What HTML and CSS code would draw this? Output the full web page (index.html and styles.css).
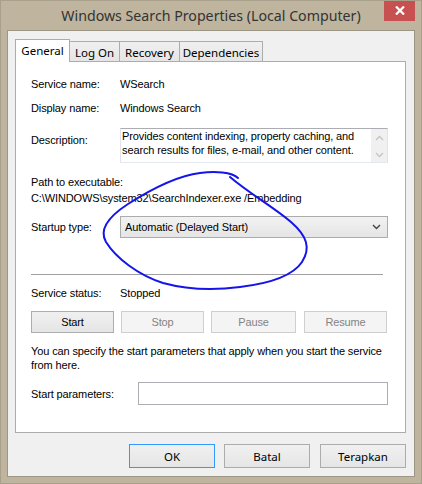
FILE: index.html
```html
<!DOCTYPE html>
<html>
<head>
<meta charset="utf-8">
<link rel="stylesheet" href="styles.css">
</head>
<body>
<div class="window">
  <div class="titlebar">
    <div class="title">Windows Search Properties (Local Computer)</div>
    <div class="close"><svg width="10" height="9" viewBox="0 0 10 9"><path d="M1 0.5 L9 8.5 M9 0.5 L1 8.5" stroke="#fff" stroke-width="2.2"/></svg></div>
  </div>
  <div class="client">
    <div class="tabs">
      <div class="tab active">General</div>
      <div class="tab t-logon">Log On</div>
      <div class="tab t-recovery">Recovery</div>
      <div class="tab t-deps">Dependencies</div>
    </div>
    <div class="panel">
      <div class="row r1"><span class="label">Service name:</span><span>WSearch</span></div>
      <div class="row r2"><span class="label">Display name:</span><span>Windows Search</span></div>
      <div class="row desc-row">
        <span class="label desc-label">Description:</span>
        <div class="desc-box">
          <div class="desc-text">Provides content indexing, property caching, and search results for files, e-mail, and other content.</div>
          <div class="scroll">
            <svg width="9" height="6" viewBox="0 0 9 6"><path d="M1 5 L4.5 1.5 L8 5" fill="none" stroke="#c4c4c4" stroke-width="1.3"/></svg>
            <svg width="9" height="6" viewBox="0 0 9 6"><path d="M1 1 L4.5 4.5 L8 1" fill="none" stroke="#c4c4c4" stroke-width="1.3"/></svg>
          </div>
        </div>
      </div>
      <div class="path-label">Path to executable:</div>
      <div class="path">C:\WINDOWS\system32\SearchIndexer.exe /Embedding</div>
      <div class="row startup-row">
        <span class="label">Startup type:</span>
        <div class="select">
          <span>Automatic (Delayed Start)</span>
          <svg width="9" height="6" viewBox="0 0 9 6"><path d="M1 1 L4.5 4.5 L8 1" fill="none" stroke="#444" stroke-width="1.4"/></svg>
        </div>
      </div>
      <div class="sep"></div>
      <div class="row status-row"><span class="label">Service status:</span><span>Stopped</span></div>
      <div class="btn-row">
        <div class="btn b-start">Start</div>
        <div class="btn disabled b-stop">Stop</div>
        <div class="btn disabled b-pause">Pause</div>
        <div class="btn disabled b-resume">Resume</div>
      </div>
      <div class="hint">You can specify the start parameters that apply when you start the service from here.</div>
      <div class="row params-row">
        <span class="params-label">Start parameters:</span>
        <div class="input"></div>
      </div>
    </div>
    <div class="dialog-btns">
      <div class="dbtn default">OK</div>
      <div class="dbtn b-batal">Batal</div>
      <div class="dbtn b-terapkan">Terapkan</div>
    </div>
  </div>
  <svg class="scribble" width="422" height="484" viewBox="0 0 422 484">
    <path d="M238 178 C232 172, 215 171, 200 173 C175 176, 150 190, 128 204 C108 217, 99 230, 106 242 C116 258, 138 275, 163 283 C185 289, 210 291, 240 287 C265 284, 292 277, 302 262 C311 248, 307 236, 291 222 C272 206, 250 194, 230 177" fill="none" stroke="#1515ea" stroke-width="2" stroke-linecap="round"/>
  </svg>
</div>
</body>
</html>
```
FILE: styles.css
```css
html, body {
  margin: 0;
  padding: 0;
  background: #bfb59e;
}
.window {
  position: relative;
  width: 422px;
  height: 484px;
  box-sizing: border-box;
  background: #bfb59e;
  border: 1px solid #a8a08b;
  overflow: hidden;
  font-family: "Liberation Sans", Arial, sans-serif;
  font-size: 11px;
  letter-spacing: -0.12px;
  color: #000;
}
.titlebar {
  height: 29px;
  display: flex;
  justify-content: center;
  align-items: flex-start;
}
.title {
  font-family: "Noto Sans", "Open Sans", sans-serif;
  font-size: 14.2px;
  color: #333;
  line-height: 20px;
  margin-top: 5px;
  letter-spacing: 0;
}
.close {
  position: absolute;
  left: 383px;
  top: -1px;
  width: 31px;
  height: 21px;
  background: #c75050;
  display: flex;
  align-items: center;
  justify-content: center;
}
.client {
  margin-left: 6px;
  width: 408px;
  height: 447px;
  box-sizing: border-box;
  background: #f0f0f0;
  border: 1px solid #9c9684;
  padding: 8px 0 0 7px;
}
.tabs {
  display: flex;
  align-items: flex-end;
  height: 22px;
  font-family: "Noto Sans", "Open Sans", sans-serif;
  font-size: 11.5px;
  letter-spacing: 0;
}
.tab {
  box-sizing: border-box;
  height: 20px;
  border: 1px solid #acacac;
  border-bottom: none;
  border-left: none;
  background: linear-gradient(#f0f0f0, #e5e5e5);
  display: flex;
  align-items: center;
  justify-content: center;
  padding-top: 1px;
}
.tab.active {
  width: 55px;
  background: #fff;
  border-left: 1px solid #acacac;
  border-right: 1px solid #acacac;
  position: relative;
  z-index: 1;
  margin-bottom: -1px;
  height: 23px;
  padding-bottom: 2px;
}
.t-logon { width: 50px; }
.t-recovery { width: 60px; }
.t-deps { width: 83px; }
.panel {
  box-sizing: border-box;
  width: 391px;
  height: 372px;
  background: #fff;
  border: 1px solid #acacac;
  padding: 15px 0 0 15px;
}
.row {
  display: flex;
  align-items: center;
  line-height: 14px;
}
.label {
  width: 89px;
  flex: none;
}
.r2 { margin-top: 10px; }
.desc-row {
  margin-top: 13px;
  align-items: flex-start;
}
.desc-label { margin-top: 5px; }
.desc-box {
  box-sizing: border-box;
  width: 268px;
  height: 35px;
  border: 1px solid #abadb3;
  border-color: #abadb3 #e2e3ea #e3e9ef #e2e3ea;
  display: flex;
  justify-content: space-between;
}
.desc-text {
  width: 250px;
  padding: 0 0 0 1px;
  line-height: 14px;
}
.scroll {
  width: 16px;
  background: #f0f0f0;
  display: flex;
  flex-direction: column;
  justify-content: space-between;
  align-items: center;
  padding: 6px 0 4px;
  box-sizing: border-box;
}
.path-label {
  margin-top: 11px;
  line-height: 16px;
}
.path { line-height: 16px; }
.startup-row { margin-top: 10px; }
.select {
  box-sizing: border-box;
  width: 268px;
  height: 22px;
  border: 1px solid #acacac;
  background: linear-gradient(#f2f2f2, #e5e5e5);
  display: flex;
  align-items: center;
  justify-content: space-between;
  padding: 0 6px 0 4px;
}
.sep {
  margin-top: 36px;
  width: 352px;
  height: 1px;
  background: #a0a0a0;
}
.status-row { margin-top: 11px; }
.btn-row {
  margin-top: 11px;
  display: flex;
  height: 22px;
}
.btn {
  box-sizing: border-box;
  height: 22px;
  width: 83px;
  border: 1px solid #adadad;
  background: linear-gradient(#f0f0f0, #e5e5e5);
  display: flex;
  align-items: center;
  justify-content: center;
}
.btn.disabled {
  border-color: #cfcfcf;
  background: #f4f4f4;
  color: #838383;
}
.b-stop { margin-left: 7px; }
.b-pause { margin-left: 7px; width: 85px; }
.b-resume { margin-left: 8px; }
.hint {
  margin-top: 11px;
  line-height: 14px;
  width: 368px;
}
.params-row { margin-top: 10px; }
.params-label { width: 107px; flex: none; }
.input {
  box-sizing: border-box;
  width: 250px;
  height: 23px;
  border: 1px solid #abadb3;
  background: #fff;
}
.dialog-btns {
  display: flex;
  margin-top: 11px;
  padding-left: 114px;
  font-family: "Noto Sans", "Open Sans", sans-serif;
  font-size: 11.5px;
  letter-spacing: 0;
}
.dbtn {
  box-sizing: border-box;
  width: 86px;
  height: 24px;
  border: 1px solid #acacac;
  background: linear-gradient(#f0f0f0, #e5e5e5);
  display: flex;
  align-items: center;
  justify-content: center;
}
.dbtn.default { border-color: #3399ff; }
.b-batal { margin-left: 9px; }
.b-terapkan { margin-left: 10px; }
.scribble {
  position: absolute;
  left: -1px;
  top: -1px;
  pointer-events: none;
}
```
